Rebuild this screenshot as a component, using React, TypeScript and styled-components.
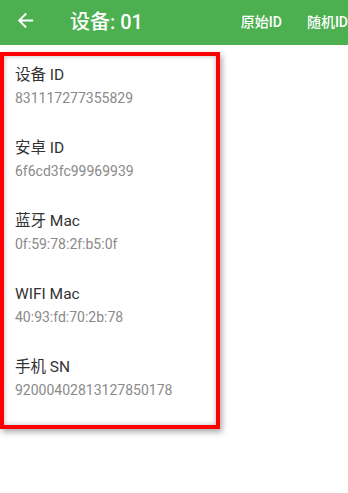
import * as React from "react";
import styled, { createGlobalStyle } from "styled-components";

const GlobalStyle = createGlobalStyle`
	html, body {
		margin: 0;
		padding: 0;
		background: #ffffff;
		font-family: Roboto, "Noto Sans CJK SC", sans-serif;
	}
`;

const Page = styled.div`
	width: 348px;
	height: 493px;
	overflow: hidden;
	background: #ffffff;
`;

const AppBar = styled.header`
	display: flex;
	align-items: center;
	height: 45px;
	padding-bottom: 4px;
	box-sizing: border-box;
	background-color: #4caf50;
	color: #ffffff;
	white-space: nowrap;
	overflow: hidden;
`;

const BackButton = styled.button`
	display: flex;
	align-items: center;
	justify-content: center;
	width: 23px;
	height: 23px;
	margin-left: 14px;
	padding: 0;
	border: none;
	background: none;
	color: #ffffff;

	svg {
		width: 23px;
		height: 23px;
	}
`;

const Title = styled.h1`
	margin: 0 0 0 33px;
	font-size: 20px;
	font-weight: 500;
	flex: 1;
`;

const Action = styled.span<{ gap: number }>`
	margin-right: ${(props) => props.gap}px;
	font-size: 14px;
	font-weight: 500;
`;

const Card = styled.section`
	display: flex;
	flex-direction: column;
	gap: 31px;
	width: 220px;
	margin-top: 7px;
	padding: 9px 11px 26px;
	box-sizing: border-box;
	border: 4px solid #ff0000;
	background: #ffffff;
	box-shadow: 2px 3px 6px rgba(0, 0, 0, 0.35), inset 0 0 5px rgba(0, 0, 0, 0.28);
`;

const Row = styled.div`
	display: flex;
	flex-direction: column;
	gap: 4px;
`;

const Label = styled.div`
	font-size: 15.5px;
	line-height: 20px;
	color: #333333;
`;

const Value = styled.div`
	font-size: 14px;
	line-height: 18px;
	color: #8a8a8a;
`;

const items = [
	{ label: "设备 ID", value: "831117277355829" },
	{ label: "安卓 ID", value: "6f6cd3fc99969939" },
	{ label: "蓝牙 Mac", value: "0f:59:78:2f:b5:0f" },
	{ label: "WIFI Mac", value: "40:93:fd:70:2b:78" },
	{ label: "手机 SN", value: "92000402813127850178" },
];

const App = (): JSX.Element => (
	<Page>
		<GlobalStyle />
		<AppBar>
			<BackButton type="button" aria-label="back">
				<svg viewBox="0 0 24 24" fill="currentColor">
					<path d="M20 11H7.83l5.59-5.59L12 4l-8 8 8 8 1.41-1.41L7.83 13H20v-2z" />
				</svg>
			</BackButton>
			<Title>设备: 01</Title>
			<Action gap={25}>原始ID</Action>
			<Action gap={0}>随机ID</Action>
		</AppBar>
		<Card>
			{items.map((item) => (
				<Row key={item.label}>
					<Label>{item.label}</Label>
					<Value>{item.value}</Value>
				</Row>
			))}
		</Card>
	</Page>
);

export default App;
